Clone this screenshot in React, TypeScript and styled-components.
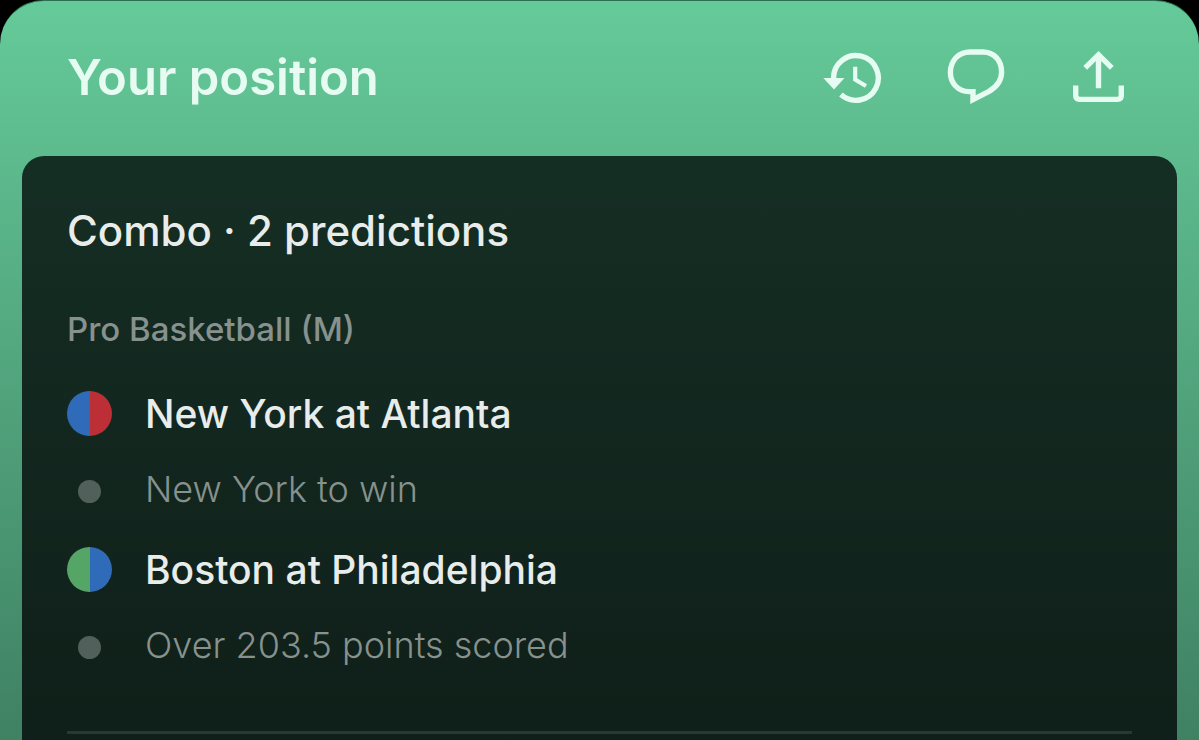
import styled, { createGlobalStyle } from "styled-components";

const GlobalStyle = createGlobalStyle`
  * {
    box-sizing: border-box;
  }
  body {
    margin: 0;
    background: #000;
    font-family: Inter, "Liberation Sans", sans-serif;
  }
`;

const Sheet = styled.main`
  display: flex;
  flex-direction: column;
  min-height: 100vh;
  padding: 0 22px;
  border-top: 1px solid #2d7152;
  border-radius: 44px 44px 0 0;
  background: linear-gradient(#65ca99, #3f8163);
`;

const Header = styled.header`
  display: flex;
  align-items: center;
  justify-content: space-between;
  height: 155px;
  padding: 0 48px 2px 45px;
`;

const Title = styled.h1`
  margin: 0;
  color: #e6fbf2;
  font-size: 49px;
  font-weight: 600;
  line-height: 60px;
`;

const Actions = styled.div`
  display: flex;
  gap: 63px;
`;

const IconButton = styled.button`
  width: 60px;
  height: 60px;
  padding: 0;
  border: none;
  background: none;
  color: #e6fbf2;
  cursor: pointer;
  svg {
    display: block;
    fill: none;
    stroke: currentColor;
  }
`;

const Panel = styled.section`
  flex: 1;
  padding: 45px 45px 0;
  border-radius: 22px 22px 0 0;
  background: linear-gradient(#152e24, #0f1f19);
`;

const PanelTitle = styled.h2`
  margin: 0;
  color: #e8edeb;
  font-size: 42px;
  font-weight: 500;
  line-height: 60px;
`;

const League = styled.h3`
  margin: 44px 0 21px;
  color: #87918d;
  font-size: 33px;
  font-weight: 500;
  line-height: 48px;
`;

const List = styled.ul`
  margin: 0;
  padding: 0;
  list-style: none;
`;

const Row = styled.div`
  display: flex;
  align-items: center;
  gap: 33px;
  height: 78px;
`;

const Marker = styled.span`
  display: flex;
  justify-content: center;
  width: 45px;
`;

const TeamsDot = styled.span<{ $away: string; $home: string }>`
  width: 45px;
  height: 45px;
  border-radius: 50%;
  background: linear-gradient(
    90deg,
    ${(p) => p.$away} 50%,
    ${(p) => p.$home} 50%
  );
`;

const PickDot = styled.span`
  width: 23px;
  height: 23px;
  border-radius: 50%;
  background: #51605a;
`;

const Game = styled.span`
  color: #e8edeb;
  font-size: 39px;
  font-weight: 500;
`;

const Pick = styled.span`
  padding-bottom: 4px;
  color: #87918d;
  font-size: 36px;
  font-weight: 300;
`;

const Divider = styled.hr`
  height: 3px;
  margin: 45px 0 0;
  border: none;
  background: #283832;
`;

const HistoryIcon = () => (
  <svg viewBox='0 0 60 60' width='60' height='60' aria-hidden='true'>
    <path d='M10.5 31V30A22.4 22.4 0 1 1 17.9 46.6' strokeWidth='5.4' />
    <path d='M32.2 18.7V31.6L43 38' strokeWidth='4.2' />
    <path d='M0.3 30H21.5L11 41.5Z' fill='currentColor' stroke='none' />
  </svg>
);

const ChatIcon = () => (
  <svg viewBox='0 0 60 60' width='60' height='60' aria-hidden='true'>
    <path
      d='M27 43.6H23C12 43.6 4.4 35 4.4 24.5C4.4 12.5 12.5 4 24 4H37C48 4 55.6 12.5 55.6 24C55.6 33.5 50.5 39 43 43.3L27 51.6Z'
      strokeWidth='5.4'
    />
  </svg>
);

const ShareIcon = () => (
  <svg viewBox='0 0 60 60' width='60' height='60' aria-hidden='true'>
    <path
      d='M29.5 40.3V7M16.2 19.8L29.5 6.7L42.8 19.8'
      strokeWidth='5.4'
    />
    <path
      d='M6.7 37.4V47.6Q6.7 51.4 10.5 51.4H48.5Q52.3 51.4 52.3 47.6V37.4'
      strokeWidth='5.4'
    />
  </svg>
);

const games = [
  {
    name: "New York at Atlanta",
    pick: "New York to win",
    away: "#2f6bb8",
    home: "#bd2f37",
  },
  {
    name: "Boston at Philadelphia",
    pick: "Over 203.5 points scored",
    away: "#55a566",
    home: "#2f6bb8",
  },
];

const App = () => {
  return (
    <>
      <GlobalStyle />
      <Sheet>
        <Header>
          <Title>Your position</Title>
          <Actions>
            <IconButton type='button' aria-label='History'>
              <HistoryIcon />
            </IconButton>
            <IconButton type='button' aria-label='Comments'>
              <ChatIcon />
            </IconButton>
            <IconButton type='button' aria-label='Share'>
              <ShareIcon />
            </IconButton>
          </Actions>
        </Header>
        <Panel>
          <PanelTitle>Combo · 2 predictions</PanelTitle>
          <League>Pro Basketball (M)</League>
          <List>
            {games.map((game) => (
              <li key={game.name}>
                <Row>
                  <Marker>
                    <TeamsDot $away={game.away} $home={game.home} />
                  </Marker>
                  <Game>{game.name}</Game>
                </Row>
                <Row>
                  <Marker>
                    <PickDot />
                  </Marker>
                  <Pick>{game.pick}</Pick>
                </Row>
              </li>
            ))}
          </List>
          <Divider />
        </Panel>
      </Sheet>
    </>
  );
};

export default App;
